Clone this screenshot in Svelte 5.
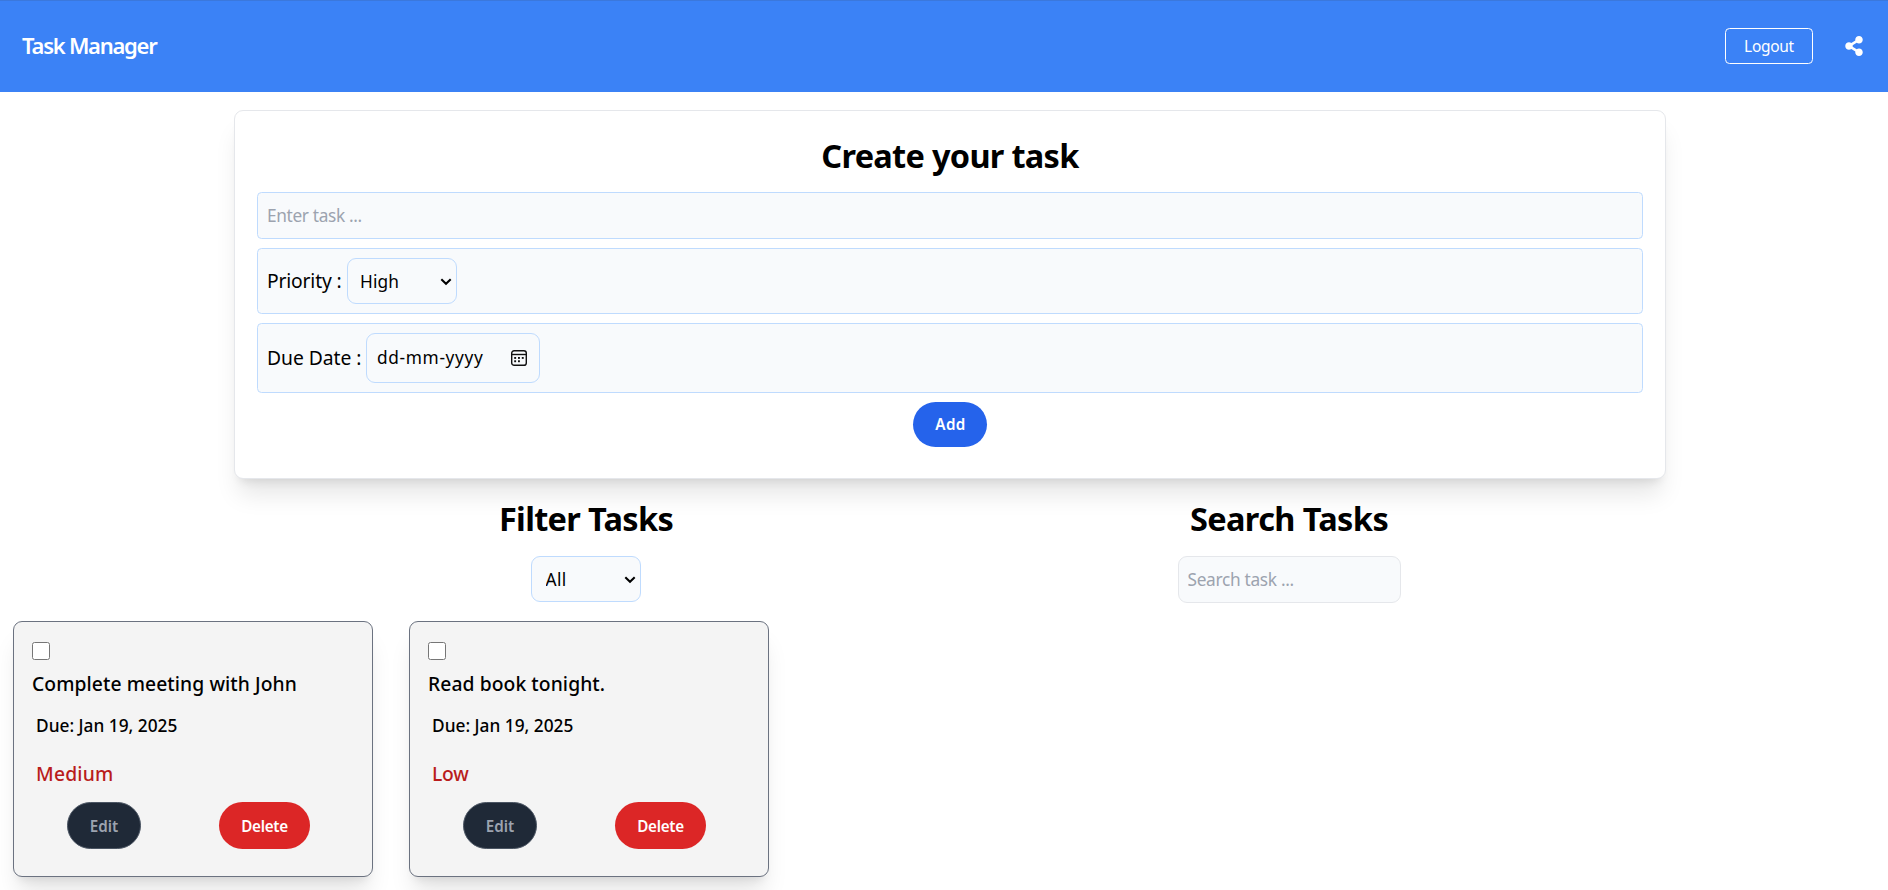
<script>
  const tasks = [
    { title: 'Complete meeting with John', due: 'Jan 19, 2025', priority: 'Medium' },
    { title: 'Read book tonight.', due: 'Jan 19, 2025', priority: 'Low' }
  ];
  const priorities = ['High', 'Medium', 'Low'];
  const filters = ['All', 'High', 'Medium', 'Low'];
</script>

{#snippet chevron()}
  <svg class="chevron" width="12" height="8" viewBox="0 0 12 8" fill="none" stroke="#000" stroke-width="2.1">
    <path d="M1.3 1.3 6 5.7 10.7 1.3" />
  </svg>
{/snippet}

<div class="page">
  <nav>
    <span class="brand">Task Manager</span>
    <div class="actions">
      <button class="logout">Logout</button>
      <svg class="share" width="18" height="20" viewBox="0 0 448 512" fill="#fff">
        <path d="M352 320c-22.608 0-43.387 7.819-59.79 20.895l-102.486-64.054a96.551 96.551 0 0 0 0-41.683l102.486-64.054C308.613 184.181 329.392 192 352 192c53.019 0 96-42.981 96-96S405.019 0 352 0s-96 42.981-96 96c0 7.158.79 14.13 2.276 20.841L155.79 180.895C139.387 167.819 118.608 160 96 160c-53.019 0-96 42.981-96 96s42.981 96 96 96c22.608 0 43.387-7.819 59.79-20.895l102.486 64.054A96.301 96.301 0 0 0 256 416c0 53.019 42.981 96 96 96s96-42.981 96-96-42.981-96-96-96z" />
      </svg>
    </div>
  </nav>

  <section class="create">
    <h1>Create your task</h1>
    <input class="task-input" type="text" placeholder="Enter task ..." />
    <div class="field priority">
      <span class="label">Priority :</span>
      <div class="select">
        <select>
          {#each priorities as p}<option>{p}</option>{/each}
        </select>
        {@render chevron()}
      </div>
    </div>
    <div class="field due">
      <span class="label date-label">Due Date :</span>
      <div class="date">
        <span>dd-mm-yyyy</span>
        <svg width="16" height="16" viewBox="0 0 16 16" fill="none" stroke="#111" stroke-width="1.4">
          <rect x="0.7" y="0.7" width="14.6" height="14.6" rx="2.4" />
          <path d="M0.7 4.5h14.6" />
          <g fill="#111" stroke="none">
            <rect x="3.2" y="7" width="1.9" height="1.9" /><rect x="7" y="7" width="1.9" height="1.9" /><rect x="10.8" y="7" width="1.9" height="1.9" />
            <rect x="3.2" y="10.3" width="1.9" height="1.9" /><rect x="7" y="10.3" width="1.9" height="1.9" />
          </g>
        </svg>
      </div>
    </div>
    <button class="pill add">Add</button>
  </section>

  <section class="tools">
    <div class="tool">
      <h2>Filter Tasks</h2>
      <div class="select filter">
        <select>
          {#each filters as f}<option>{f}</option>{/each}
        </select>
        {@render chevron()}
      </div>
    </div>
    <div class="tool">
      <h2 class="search-title">Search Tasks</h2>
      <input class="search" type="text" placeholder="Search task ..." />
    </div>
  </section>

  <section class="tasks">
    {#each tasks as t}
      <article>
        <input type="checkbox" />
        <h3>{t.title}</h3>
        <p class="when">Due: {t.due}</p>
        <p class="level" class:low={t.priority === 'Low'}>{t.priority}</p>
        <div class="buttons">
          <button class="pill edit">Edit</button>
          <button class="pill delete">Delete</button>
        </div>
      </article>
    {/each}
  </section>
</div>

<style>
  :global(body) { margin: 0; background: #fff; overflow: hidden; }
  .page, .page * { box-sizing: border-box; }
  .page {
    font-family: "Noto Sans", "Open Sans", sans-serif;
    color: #000;
    height: 890px;
    overflow: hidden;
    display: flex;
    flex-direction: column;
  }
  h1, h2, h3, p { margin: 0; }
  button, input, select { font-family: inherit; margin: 0; }
  nav {
    height: 92px;
    flex: none;
    background: #3b82f6;
    border-top: 1px solid #3b78dc;
    padding: 0 25px 1px 22px;
    display: flex;
    align-items: center;
    justify-content: space-between;
    color: #fff;
  }
  .brand { font-size: 22px; font-weight: 600; letter-spacing: -1.25px; padding-bottom: 2px; }
  .actions { display: flex; align-items: center; gap: 32px; }
  .logout {
    width: 88px;
    height: 36px;
    padding: 0;
    border: 1px solid #fff;
    border-radius: 4.5px;
    background: transparent;
    color: #fff;
    font-size: 15.5px;
    letter-spacing: -0.3px;
  }
  .share { display: block; }

  .create {
    width: 1432px;
    height: 369px;
    flex: none;
    margin: 18px 0 0 234px;
    padding: 23px 22px 0;
    border: 1px solid #e5e7eb;
    border-radius: 9px;
    background: #fff;
    box-shadow: 0 20px 25px -5px rgba(0, 0, 0, 0.1), 0 8px 10px -6px rgba(0, 0, 0, 0.1);
    display: flex;
    flex-direction: column;
    align-items: stretch;
  }
  h1, h2 { font-size: 32.5px; line-height: 44px; font-weight: 700; text-align: center; }
  h1 { letter-spacing: -0.7px; margin-bottom: 14px; }
  h2 { letter-spacing: -0.66px; }
  .search-title { letter-spacing: -0.6px; }
  .task-input, .search {
    font-size: 17.3px;
    border: 1px solid #bfdbfe;
    background: #f8fafc;
    border-radius: 4.5px;
    height: 47px;
    padding: 0 9px;
    letter-spacing: -0.35px;
    outline: none;
  }
  .task-input::placeholder, .search::placeholder { color: #9ca3af; opacity: 1; }
  .field {
    margin-top: 9px;
    border: 1px solid #bfdbfe;
    background: #f8fafc;
    border-radius: 4.5px;
    padding: 0 9px;
    display: flex;
    align-items: center;
  }
  .priority { height: 66px; }
  .due { height: 70px; }
  .label { font-size: 19.3px; letter-spacing: -0.18px; width: 80px; white-space: nowrap; padding-bottom: 2px; }
  .date-label { width: 99px; letter-spacing: -0.05px; }
  .select { position: relative; width: 110px; height: 46px; }
  .select select {
    appearance: none;
    width: 100%;
    height: 100%;
    border: 1px solid #bfdbfe;
    border-radius: 9px;
    background: #f8fafc;
    color: #000;
    font-size: 17.3px;
    letter-spacing: 0.14px;
    padding: 0 24px 0 12px;
    outline: none;
  }
  .filter select { padding-left: 13.5px; letter-spacing: 0.4px; }
  .chevron { position: absolute; right: 5px; top: 20px; pointer-events: none; }
  .date {
    width: 174px;
    height: 50px;
    border: 1px solid #bfdbfe;
    border-radius: 9px;
    padding: 0 12px 0 10px;
    display: flex;
    align-items: center;
    justify-content: space-between;
    font-size: 17.3px;
    letter-spacing: 0.65px;
  }
  .date span { padding-bottom: 2px; }
  .pill {
    border: none;
    border-radius: 24px;
    padding: 0;
    font-size: 15.2px;
    font-weight: 600;
    color: #fff;
  }
  .add { width: 74px; height: 45px; margin-top: 9px; align-self: center; background: #2563eb; letter-spacing: 0.39px; padding: 0 0 1px 1px; }

  .tools { display: grid; grid-template-columns: 704px 702px; margin: 18px 0 0 234px; flex: none; }
  .tool { display: flex; flex-direction: column; align-items: center; }
  .filter { margin-top: 15px; }
  .search { width: 223px; margin-top: 15px; border-color: #e5e7eb; border-radius: 9px; letter-spacing: -0.31px; }

  .tasks { display: flex; gap: 36px; margin: 18px 0 0 13px; }
  article {
    width: 360px;
    height: 256px;
    border: 1px solid #6b7280;
    border-radius: 9px;
    background: #f4f4f4;
    padding: 20px 18px 0;
    box-shadow: 0 20px 25px -5px rgba(0, 0, 0, 0.1), 0 8px 10px -6px rgba(0, 0, 0, 0.1);
    display: flex;
    flex-direction: column;
  }
  article input { width: 18px; height: 18px; flex: none; }
  h3 { font-size: 19.3px; font-weight: 500; line-height: 28px; margin-top: 10px; letter-spacing: 0.08px; white-space: nowrap; }
  .when { font-size: 17.3px; font-weight: 500; line-height: 28px; padding-left: 4px; margin-top: 14px; }
  .level { font-size: 19.3px; font-weight: 500; line-height: 28px; padding-left: 4px; margin-top: 20px; color: #b91c1c; letter-spacing: 0.2px; }
  .low { letter-spacing: -0.2px; }
  .buttons { display: flex; gap: 78px; margin: 14px 0 0 35px; }
  .buttons .pill { height: 47px; }
  .edit { width: 74px; background: #1f2937; border: 1px solid #4b5563; color: #9ca3af; }
  .delete { width: 91px; background: #dc2626; letter-spacing: -0.27px; }
</style>
